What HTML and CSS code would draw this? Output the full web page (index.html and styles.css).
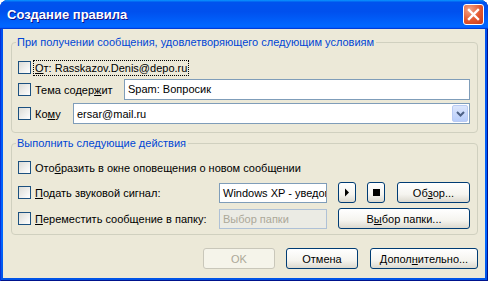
FILE: index.html
```html
<!DOCTYPE html>
<html>
<head>
    <title>Создание правила</title>
    <link rel="stylesheet" href="styles.css">
</head>
<body>
    <div class="window">
        <div class="titlebar">
            <span class="title">Создание правила</span>
            <span class="close">
                <svg width="13" height="13" viewBox="0 0 13 13"><path d="M2 2L11 11M11 2L2 11" stroke="#fff" stroke-width="2.4" stroke-linecap="square"/></svg>
            </span>
        </div>
        <div class="client">
            <fieldset class="group group-cond">
                <legend>При получении сообщения, удовлетворяющего следующим условиям</legend>
                <div class="row row-from">
                    <span class="check"></span>
                    <span class="label focus"><u>О</u>т: Rasskazov.Denis@depo.ru</span>
                </div>
                <div class="row row-subject">
                    <span class="check"></span>
                    <span class="label label-subject">Тема содер<u>ж</u>ит</span>
                    <span class="edit edit-subject">Spam: Вопросик</span>
                </div>
                <div class="row row-to">
                    <span class="check"></span>
                    <span class="label label-to">Ко<u>м</u>у</span>
                    <span class="combo">
                        <span class="combo-text">ersar@mail.ru</span>
                        <span class="combo-btn">
                            <svg width="9" height="6" viewBox="0 0 9 6"><path d="M1 1L4.5 4.5L8 1" fill="none" stroke="#4d6185" stroke-width="2"/></svg>
                        </span>
                    </span>
                </div>
            </fieldset>

            <fieldset class="group group-act">
                <legend>Выполнить следующие действия</legend>
                <div class="row row-notify">
                    <span class="check"></span>
                    <span class="label">Ото<u>б</u>разить в окне оповещения о новом сообщении</span>
                </div>
                <div class="row row-sound">
                    <span class="check"></span>
                    <span class="label label-wide"><u>П</u>одать звуковой сигнал:</span>
                    <span class="edit edit-small">Windows XP - уведом</span>
                    <span class="btn btn-icon">
                        <svg width="6" height="9" viewBox="0 0 6 9"><path d="M1 0.5L5 4.5L1 8.5Z" fill="#000"/></svg>
                    </span>
                    <span class="btn btn-icon">
                        <svg width="7" height="7" viewBox="0 0 7 7"><rect width="7" height="7" fill="#000"/></svg>
                    </span>
                    <span class="btn btn-browse">Об<u>з</u>ор...</span>
                </div>
                <div class="row row-folder">
                    <span class="check"></span>
                    <span class="label label-wide"><u>П</u>ереместить сообщение в папку:</span>
                    <span class="edit edit-small disabled">Выбор папки</span>
                    <span class="btn btn-folder">В<u>ы</u>бор папки...</span>
                </div>
            </fieldset>

            <div class="actions">
                <span class="btn btn-dlg disabled">OK</span>
                <span class="btn btn-dlg">Отмена</span>
                <span class="btn btn-more">Допол<u>н</u>ительно...</span>
            </div>
        </div>
    </div>
</body>
</html>
```

FILE: styles.css
```css
body {
    margin: 0;
    font-family: "Liberation Sans", Arial, sans-serif;
    font-size: 11px;
    color: #000;
}
.window {
    width: 488px;
    height: 281px;
    box-sizing: border-box;
    display: flex;
    flex-direction: column;
    padding: 0 3px 3px 3px;
    border-radius: 8px 8px 0 0;
    background: linear-gradient(180deg, #0997ff, #0053ee 3%, #0050ee 12%, #0066ff 85%, #0052e6 100%);
    box-shadow: inset 1px 0 #0831d9, inset -1px 0 #00138c, inset 0 -1px #00138c;
}
.titlebar {
    height: 29px;
    display: flex;
    align-items: center;
    padding: 0 1px 0 4px;
    margin: 0 -3px;
    border-radius: 8px 8px 0 0;
    background: linear-gradient(180deg, #0997ff, #0053ee 8%, #0050ee 40%, #0066ff 88%, #0066ff 93%, #005bff 95%, #003dd7 96%, #003dd7);
}
.title {
    flex: 1;
    color: #fff;
    font-family: "Liberation Sans", Arial, sans-serif;
    font-weight: bold;
    font-size: 13px;
    padding-left: 3px;
    text-shadow: 1px 1px #0f1089;
}
.close {
    width: 21px;
    height: 21px;
    box-sizing: border-box;
    margin-right: 3px;
    border: 1px solid #fff;
    border-radius: 3px;
    display: flex;
    align-items: center;
    justify-content: center;
    background: radial-gradient(circle at 30% 25%, #f4a487 0, #e2572f 55%, #c8391b 100%);
}
.client {
    flex: 1;
    background: #ece9d8;
    padding-top: 7px;
    display: flex;
    flex-direction: column;
}
.group {
    margin: 0 7px 0 8px;
    padding: 0 7px 8px 6px;
    border: 1px solid #d0d0bf;
    border-radius: 4px;
    min-width: 0;
}
.group legend {
    color: #0046d5;
    line-height: 13px;
    padding: 0 2px 0 1px;
    margin-left: -2px;
}
.group-cond {
    padding-top: 8px;
}
.group-act {
    margin-top: 4px;
    padding-top: 7px;
    padding-bottom: 5px;
}
.row {
    display: flex;
    align-items: center;
    height: 21px;
}
.row-subject { margin-top: 1px; }
.row-to { margin-top: 3px; }
.row-sound { margin-top: 4px; }
.row-folder { margin-top: 5px; }
.check {
    width: 13px;
    height: 13px;
    box-sizing: border-box;
    border: 1px solid #1c5180;
    background: linear-gradient(135deg, #dcdcd7, #ffffff);
    margin-right: 2px;
    flex-shrink: 0;
}
.label {
    padding: 1px 1px;
    border: 1px solid transparent;
    white-space: nowrap;
}
.focus {
    border: 1px dotted #000;
}
.label-subject { width: 87px; }
.label-to { width: 36px; }
.label-wide { width: 182px; }
.edit {
    height: 21px;
    box-sizing: border-box;
    border: 1px solid #7f9db9;
    background: #fff;
    padding: 0 3px;
    line-height: 19px;
    white-space: nowrap;
    overflow: hidden;
}
.edit-subject {
    flex: 1;
}
.edit-small {
    width: 108px;
    height: 20px;
    line-height: 18px;
    flex-shrink: 0;
}
.edit.disabled {
    background: #ebebe4;
    border-color: #afc1d6;
    color: #aca899;
}
.combo {
    flex: 1;
    height: 21px;
    box-sizing: border-box;
    border: 1px solid #7f9db9;
    background: #fff;
    display: flex;
    align-items: center;
    padding: 0 1px 0 3px;
}
.combo-text {
    flex: 1;
}
.combo-btn {
    width: 16px;
    height: 17px;
    box-sizing: border-box;
    border: 1px solid #b9cbf3;
    border-radius: 2px;
    background: linear-gradient(180deg, #dce6fc, #b8cdfa);
    display: flex;
    align-items: center;
    justify-content: center;
}
.btn {
    height: 21px;
    box-sizing: border-box;
    border: 1px solid #003c74;
    border-radius: 3px;
    background: linear-gradient(180deg, #ffffff, #f5f4ef 60%, #dcd9cf);
    display: flex;
    align-items: center;
    justify-content: center;
    white-space: nowrap;
    flex-shrink: 0;
}
.btn-icon {
    width: 18px;
    margin-left: 11px;
}
.btn-icon + .btn-icon { margin-left: 11px; }
.btn-browse {
    width: 73px;
    margin-left: 12px;
}
.btn-folder {
    width: 132px;
    margin-left: 11px;
}
.actions {
    display: flex;
    justify-content: flex-end;
    gap: 11px;
    margin-top: 13px;
    padding-right: 7px;
}
.btn-dlg {
    width: 72px;
}
.btn-more {
    width: 108px;
    margin-left: 1px;
}
.btn.disabled {
    border-color: #c9c7ba;
    background: #f5f4ea;
    color: #aca899;
}
```
